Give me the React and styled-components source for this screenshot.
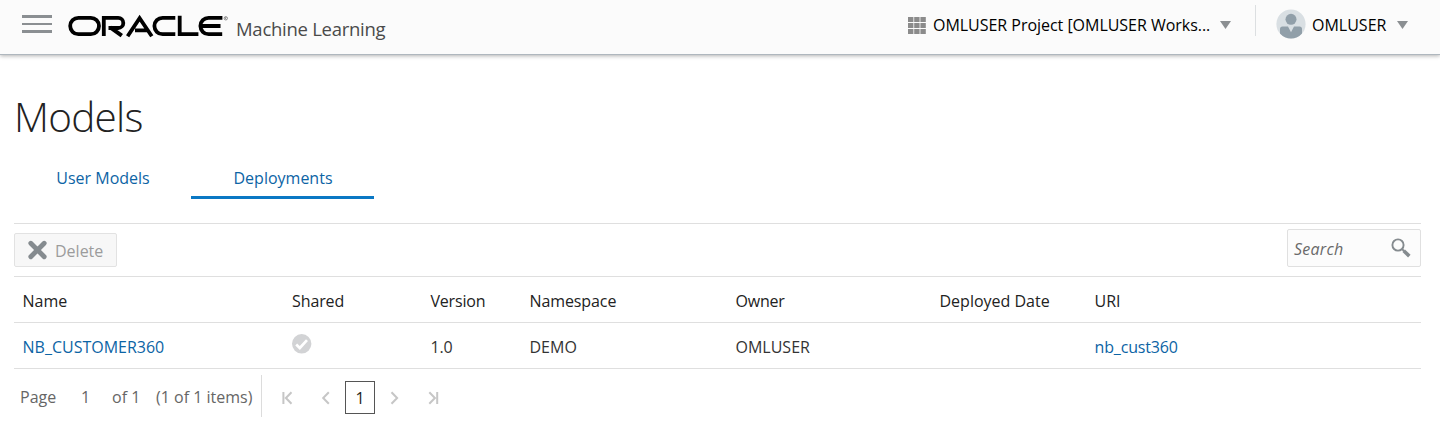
import React from "react";
import styled, { createGlobalStyle } from "styled-components";

const Global = createGlobalStyle`
  * { box-sizing: border-box; }
  body { margin: 0; background: #fff; font-family: "Open Sans", "Noto Sans", sans-serif; font-size: 16px; line-height: 22px; color: #333; }
`;

const Page = styled.div`
  height: 442px;
  overflow: hidden;
`;
const Header = styled.header`
  display: flex;
  height: 55px;
  background: #fbfbfb;
  border-bottom: 1px solid #afb7be;
  box-shadow: 0 1px 4px rgba(0, 0, 0, 0.3);
`;
const MenuButton = styled.div`
  display: flex;
  flex-direction: column;
  gap: 5px;
  margin: 15px 16px 0 22px;
  width: 30px;
`;
const MenuBar = styled.span`
  height: 2.5px;
  background: #8b8f92;
`;
const Logo = styled.svg`
  margin-top: 12px;
  width: 164px;
  height: 28px;
  flex: none;
`;
const Product = styled.div`
  margin: 16px 0 0 4px;
  font-size: 18.5px;
  line-height: 26px;
  color: #4a4a4a;
  white-space: nowrap;
  letter-spacing: -0.27px;
`;
const HeaderTools = styled.div`
  display: flex;
  margin-left: auto;
  color: #000;
`;
const HeaderIcon = styled.svg`
  width: ${(p) => p.$w}px;
  height: ${(p) => p.$h}px;
  margin: ${(p) => p.$m};
  flex: none;
`;
const HeaderText = styled.div`
  width: ${(p) => p.$w}px;
  margin-top: 14px;
  white-space: nowrap;
  letter-spacing: ${(p) => p.$track || 0}px;
`;
const HeaderRule = styled.div`
  width: 1px;
  height: 31px;
  margin: 5px 20px 0 24px;
  background: #dcdfe1;
`;

const Main = styled.main`
  padding: 36px 19px 0 14px;
`;
const Title = styled.h1`
  margin: 0;
  height: 61px;
  font-size: 40.5px;
  line-height: 52px;
  font-weight: 300;
  color: #222;
  letter-spacing: -0.75px;
`;
const Tabs = styled.nav`
  display: flex;
`;
const Tab = styled.a`
  height: 47px;
  width: ${(p) => p.$w}px;
  padding: 15px 0 0 1px;
  text-align: center;
  color: #0c64a5;
  border-bottom: 3px solid ${(p) => (p.$active ? "#0a78c4" : "transparent")};
`;
const Panel = styled.section`
  margin-top: 24px;
  border-top: 1px solid #dfdfdf;
`;
const Toolbar = styled.div`
  display: flex;
  justify-content: space-between;
  height: 53px;
  border-bottom: 1px solid #dfdfdf;
`;
const DeleteButton = styled.button`
  display: flex;
  align-items: center;
  gap: 8px;
  width: 103px;
  height: 34px;
  margin-top: 9px;
  padding: 0 0 0 13px;
  border: 1px solid #e2e2e2;
  border-radius: 2px;
  background: #f7f7f7;
  color: #9c9c9c;
  font: inherit;
`;
const ButtonLabel = styled.span`
  padding-top: 2px;
`;
const SearchBox = styled.div`
  display: flex;
  justify-content: space-between;
  width: 134px;
  height: 38px;
  margin-top: 5px;
  padding: 8px 9px 0 6px;
  border: 1px solid #e0e0e0;
  border-radius: 2px;
  background: #fcfcfc;
  color: #6a6a6a;
  font-style: italic;
  letter-spacing: 0.25px;
`;
const Row = styled.div`
  display: grid;
  grid-template-columns: 269.5px 138.5px 99px 206px 204px 155px 1fr;
  height: 46px;
  padding: 13px 0 0 8.5px;
  border-bottom: 1px solid #dfdfdf;
  color: ${(p) => (p.$head ? "#222" : "#333")};
`;
const Cell = styled.div`
  white-space: nowrap;
  letter-spacing: ${(p) => p.$track || 0}px;
`;
const Link = styled.a`
  color: #0c64a5;
`;
const CheckIcon = styled.svg`
  display: block;
  width: 20px;
  height: 20px;
  margin-top: -2px;
`;
const Pager = styled.footer`
  display: flex;
  padding: 6px 0 0 6px;
  color: #666;
`;
const PagerText = styled.span`
  width: ${(p) => p.$w}px;
  padding-top: 11px;
  white-space: nowrap;
`;
const PagerRule = styled.span`
  width: 1px;
  height: 42px;
  background: #dcdcdc;
`;
const Arrows = styled.svg`
  width: ${(p) => p.$w}px;
  height: 42px;
`;
const CurrentPage = styled.span`
  display: flex;
  align-items: center;
  justify-content: center;
  width: 30px;
  height: 33px;
  margin-top: 6px;
  border: 1px solid #555;
  color: #222;
`;

const Caret = ({ m }) => (
  <HeaderIcon $w={11} $h={8} $m={m} viewBox="0 0 11 8">
    <path d="M0 0h11L5.5 8z" fill="#8b8f92" />
  </HeaderIcon>
);

const OracleLogo = () => (
  <Logo viewBox="68 12 164 28" fill="none" stroke="#000" strokeWidth="3.8">
    <rect x="70.2" y="17.8" width="28.8" height="16.4" rx="8.2" />
    <path d="M103.8 36V17.8H118.2a5.1 5.1 0 0 1 0 10.2H108.5" />
    <path d="M110.2 27.3L121.800 35.600" strokeWidth="4" />
    <path d="M127.600 36.200L139.600 18.200L151.800 36.200M135 30.400H147" />
    <path d="M175.300 17.800H162.600a8.200 8.200 0 0 0 0 16.400H175.300" />
    <path d="M179.700 15.800V34.200H198.400" />
    <path d="M222.400 17.800H208.600a8.200 8.200 0 0 0 0 16.400H222.200M202 26H220.500" />
    <circle cx="225.800" cy="18.300" r="1.700" stroke="#555" strokeWidth="0.600" />
    <path d="M225.300 19.300v-2h.7q.6.5 0 1h-.6l.9 1" stroke="#555" strokeWidth="0.400" />
  </Logo>
);

export default function App() {
  return (
    <Page>
      <Global />
      <Header>
        <MenuButton><MenuBar /><MenuBar /><MenuBar /></MenuButton>
        <OracleLogo />
        <Product>Machine Learning</Product>
        <HeaderTools>
          <HeaderIcon $w={18} $h={17} $m="17px 7px 0 0" viewBox="0 0 18 17" fill="#8b8b8b">
            {[0, 6, 12].map((y) => [0, 6.2, 12.4].map((x) => (
              <rect key={`${x}-${y}`} x={x} y={y} width="5.4" height="5" />
            )))}
          </HeaderIcon>
          <HeaderText $w={287} $track={-0.03}>OMLUSER Project [OMLUSER Works...</HeaderText>
          <Caret m="21px 0 0" />
          <HeaderRule />
          <HeaderIcon $w={30} $h={30} $m="9px 6px 0 0" viewBox="0 0 30 30">
            <circle cx="15" cy="15" r="14.6" fill="#d9dfe3" />
            <circle cx="15" cy="10.3" r="5.5" fill="#919fa9" />
            <path d="M4 24.5V20q0-2.500 2.500-2.500H12l3 5.800 3-5.800h5.500Q26 17.500 26 20v4.500A14.600 14.600 0 0 1 4 24.500z" fill="#919fa9" />
          </HeaderIcon>
          <HeaderText $w={85}>OMLUSER</HeaderText>
          <Caret m="21px 32px 0 0" />
        </HeaderTools>
      </Header>
      <Main>
        <Title>Models</Title>
        <Tabs>
          <Tab $w={177}>User Models</Tab>
          <Tab $w={183} $active>Deployments</Tab>
        </Tabs>
        <Panel>
          <Toolbar>
            <DeleteButton disabled>
              <svg width="19" height="20" viewBox="0 0 19 20">
                <path d="M2.800 3.200L16.200 16.800M16.200 3.200L2.800 16.800" stroke="#858b8f" strokeWidth="4.800" strokeLinecap="round" />
              </svg>
              <ButtonLabel>Delete</ButtonLabel>
            </DeleteButton>
            <SearchBox>
              Search
              <svg width="20" height="20" viewBox="0 0 20 20" fill="none" stroke="#858b8f">
                <circle cx="7" cy="7" r="5.600" strokeWidth="1.900" />
                <path d="M11 11l2 2" strokeWidth="1.800" />
                <path d="M12.700 12.700l5.600 5.400" strokeWidth="3.600" />
              </svg>
            </SearchBox>
          </Toolbar>
          <Row $head>
            <Cell>Name</Cell>
            <Cell $track={-0.1}>Shared</Cell>
            <Cell $track={-0.2}>Version</Cell>
            <Cell $track={-0.1}>Namespace</Cell>
            <Cell $track={-0.2}>Owner</Cell>
            <Cell>Deployed Date</Cell>
            <Cell>URI</Cell>
          </Row>
          <Row>
            <Cell><Link>NB_CUSTOMER360</Link></Cell>
            <Cell>
              <CheckIcon viewBox="0 0 20 20">
                <circle cx="9.700" cy="9.800" r="9.700" fill="#d2d3d5" />
                <path d="M4.200 10.500l3.600 3.500L15 6.200" fill="none" stroke="#fff" strokeWidth="2.700" />
              </CheckIcon>
            </Cell>
            <Cell $track={-0.2}>1.0</Cell>
            <Cell>DEMO</Cell>
            <Cell>OMLUSER</Cell>
            <Cell />
            <Cell $track={-0.15}><Link>nb_cust360</Link></Cell>
          </Row>
          <Pager>
            <PagerText $w={61}>Page</PagerText>
            <PagerText $w={31}>1</PagerText>
            <PagerText $w={44}>of 1</PagerText>
            <PagerText $w={105}>(1 of 1 items)</PagerText>
            <PagerRule />
            <Arrows $w={83} viewBox="262 375 83 42" fill="none" stroke="#c6c6c6" strokeWidth="2">
              <path d="M283.400 392v12M291.500 392.300l-5.600 5.700 5.600 5.700M328.800 392.300l-5.600 5.700 5.600 5.700" />
            </Arrows>
            <CurrentPage>1</CurrentPage>
            <Arrows $w={83} viewBox="375 375 83 42" fill="none" stroke="#c6c6c6" strokeWidth="2">
              <path d="M391.500 392.300l5.600 5.700-5.600 5.700M429.300 392.300l5.600 5.700-5.600 5.700M437.200 392v12" />
            </Arrows>
          </Pager>
        </Panel>
      </Main>
    </Page>
  );
}
